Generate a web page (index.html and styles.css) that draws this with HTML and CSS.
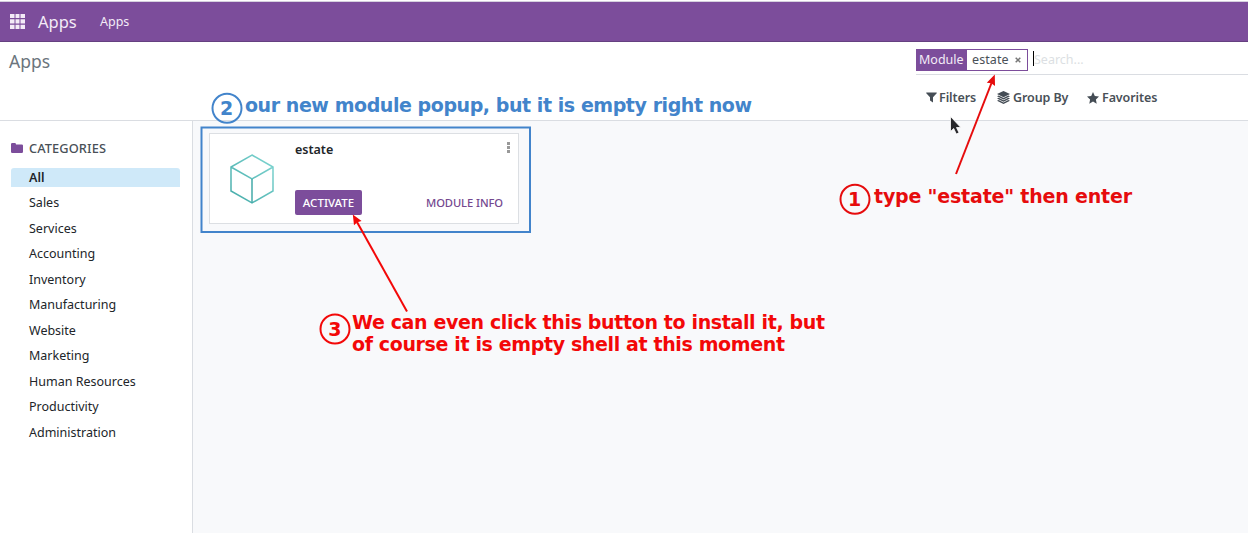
FILE: index.html
```html
<!DOCTYPE html>
<html lang="en">
<head>
<meta charset="utf-8">
<title>Apps</title>
<link rel="stylesheet" href="styles.css">
</head>
<body>
<header class="navbar">
  <svg class="grid-icon" viewBox="0 0 15 15"><path d="M0 0h4.500v4H0zM5.500 0h4v4h-4zM10.500 0H15v4h-4.500zM0 5.300h4.500v4.300H0zM5.500 5.300h4v4.300h-4zM10.500 5.300H15v4.300h-4.500zM0 10.800h4.500V15H0zM5.500 10.800h4V15h-4zM10.500 10.800H15V15h-4.500z"/></svg>
  <span class="brand">Apps</span>
  <span class="nav-link">Apps</span>
</header>
<section class="control-panel">
  <h1 class="title">Apps</h1>
  <div class="search">
    <div class="search-box">
      <div class="facet"><span class="facet-label">Module</span><span class="facet-value">estate</span><svg class="facet-close" viewBox="0 0 6 6"><path d="M.7 .7 5.3 5.3M5.3 .7 .7 5.3"/></svg></div>
      <span class="placeholder">Search...</span>
    </div>
    <div class="filters">
      <span class="filter f-filters"><svg class="funnel" viewBox="0 0 11 11"><path d="M.5 .4h10q.6.4.2.900L7 5.300v5.300L4 8.400V5.300L.3 1.300Q-.1.800.5.4z"/></svg>Filters</span>
      <span class="filter f-group"><svg class="layers" viewBox="0 0 13 13"><path d="M6.500 0 13 3 6.500 6.200 0 3z"/><path d="M0 5.200 1.700 4.500 6.500 6.900 11.300 4.500 13 5.200 6.500 8.400zM0 7.500 1.700 6.800 6.500 9.200 11.300 6.800 13 7.500 6.500 10.700zM0 9.800 1.700 9.100 6.500 11.500 11.300 9.100 13 9.800 6.500 13z"/></svg>Group By</span>
      <span class="filter f-fav"><svg class="star" viewBox="0 0 12 12"><path d="M6 0 7.800 3.900 12 4.500 8.900 7.400 9.700 11.700 6 9.600 2.300 11.700 3.100 7.400 0 4.500 4.200 3.900z"/></svg>Favorites</span>
    </div>
  </div>
</section>
<main class="content">
  <aside class="sidebar">
    <div class="side-head"><svg class="folder" viewBox="0 0 12 10"><path d="M0 1.200Q0 0 1.200 0h2.600Q5 0 5 1.400h5.800q1.200 0 1.200 1.200v6.200Q12 10 10.800 10H1.200Q0 10 0 8.800z"/></svg><span>CATEGORIES</span></div>
    <ul class="cats">
      <li class="active"><span>All</span></li>
      <li><span>Sales</span></li>
      <li><span>Services</span></li>
      <li><span>Accounting</span></li>
      <li><span>Inventory</span></li>
      <li><span>Manufacturing</span></li>
      <li><span>Website</span></li>
      <li><span>Marketing</span></li>
      <li><span>Human Resources</span></li>
      <li><span>Productivity</span></li>
      <li><span>Administration</span></li>
    </ul>
  </aside>
  <div class="board">
    <article class="card">
      <svg class="cube" viewBox="0 0 46 52">
        <defs><linearGradient id="teal" x1="0" y1="1" x2="1" y2="0"><stop offset="0" stop-color="#43aaa8"/><stop offset="1" stop-color="#80d6d2"/></linearGradient></defs>
        <path d="M23 2 44 14V38L23 50 2 38V14zM2 14 23 26 44 14"/><path class="spine" d="M23 26V50"/>
      </svg>
      <div class="card-body">
        <div class="card-top"><span class="name">estate</span><svg class="dots" viewBox="0 0 3 11"><path d="M0 0h3v3H0zM0 4h3v3H0zM0 8h3v3H0z"/></svg></div>
        <div class="card-actions"><button class="activate"><span>ACTIVATE</span></button><a class="info">MODULE INFO</a></div>
      </div>
    </article>
  </div>
</main>
<svg class="annotations" viewBox="0 0 1248 533">
  <g class="blue">
    <rect x="201.500" y="127.500" width="328.500" height="104.500"/>
    <circle cx="227" cy="108.200" r="14.500"/>
    <text x="220" y="115.200" class="num">2</text>
    <text x="245" y="112" textLength="507">our new module popup, but it is empty right now</text>
  </g>
  <g class="red dark">
    <circle cx="855" cy="199.300" r="14.500"/>
    <text x="848" y="206.200" class="num">1</text>
    <text x="874" y="203" textLength="258">type "estate" then enter</text>
    <path class="line" d="M956 174 991.500 83"/><path class="head" d="M994.800 74.500 995 86 991.300 83.300 986.800 82.800z"/>
  </g>
  <g class="red">
    <circle cx="335" cy="329" r="14.500"/>
    <text x="328.200" y="336" class="num">3</text>
    <text x="352" y="329" textLength="473">We can even click this button to install it, but</text>
    <text x="352" y="351" textLength="433">of course it is empty shell at this moment</text>
    <path class="line" d="M407 311.500 357 222"/><path class="head" d="M352.800 214.500 361.600 221 357.300 222.300 354 225.300z"/>
  </g>
  <path class="pointer" d="M950.500 116.500V131.500L953.700 128.500 956.300 134 959 132.800 956.500 127.500H960.800z"/>
</svg>
</body>
</html>
```
FILE: styles.css
```css
* { box-sizing: border-box; }
body {
  margin: 0;
  width: 1248px;
  height: 533px;
  overflow: hidden;
  display: flex;
  flex-direction: column;
  background: #fff;
  color: #212529;
  font: 12.5px/20px "Noto Sans", sans-serif;
}
svg { flex: none; display: block; }
.navbar {
  height: 41px;
  margin-top: 1px;
  flex: none;
  display: flex;
  align-items: center;
  padding: 0 10px;
  background: #7c4d9b;
  border-top: 1px solid #d5d0de;
  border-bottom: 1px solid #654080;
  color: #f3ebf7;
}
.grid-icon { width: 15px; height: 15px; margin-bottom: 1px; fill: #f3ebf7; }
.brand { margin-left: 13px; width: 62px; font-size: 16.500px; }
.nav-link { padding-top: 1px; font-size: 12.500px; }
.control-panel {
  height: 79px;
  flex: none;
  display: flex;
  justify-content: space-between;
  padding: 0 0 0 9px;
  border-bottom: 1px solid #dadde2;
}
.title { margin: 8px 0 0; font-size: 17.500px; line-height: 22px; font-weight: 400; color: #6c757d; }
.search { width: 332px; }
.search-box {
  height: 33px;
  display: flex;
  padding-top: 7px;
  border-bottom: 1px solid #dadde2;
}
.facet {
  width: 112px;
  height: 22px;
  display: flex;
  align-items: center;
  border: 1px solid #7c4d9b;
  color: #495057;
}
.facet-label { width: 50px; height: 20px; padding-left: 2px; background: #7c4d9b; color: #f3ebf7; }
.facet-value { width: 47px; padding-left: 5px; letter-spacing: .1px; }
.facet-close { width: 6px; height: 6px; margin-left: 1px; stroke: #777; stroke-width: 1.500; }
.placeholder { height: 15px; line-height: 17px; margin: 2px 0 0 5px; border-left: 1px solid #000; color: #dcdfe3; }
.filters { display: flex; padding: 13px 0 0 10px; font-size: 12.500px; font-weight: 600; letter-spacing: -.1px; color: #495057; }
.filter { display: flex; align-items: center; }
.filter svg { fill: #454d55; }
.f-filters { width: 71px; }
.f-group { width: 90px; }
.funnel { width: 11px; height: 11px; margin: 0 2px 1px 0; }
.layers { width: 13px; height: 13px; margin: 0 3px 1px 0; }
.star { width: 12px; height: 12px; margin: 0 3px 1px 0; }
.content { flex: 1; display: flex; }
.sidebar { width: 193px; padding: 18px 12px 0 11px; border-right: 1px solid #dadde2; }
.side-head { display: flex; align-items: center; gap: 6px; height: 18px; line-height: 18px; font-size: 12.800px; font-weight: 500; letter-spacing: .1px; color: #495057; }
.folder { width: 12px; height: 10px; fill: #7c4d9b; }
.cats { list-style: none; margin: 11px 0 0; padding: 0; }
.cats li { height: 25.550px; padding-left: 18px; line-height: 25px; }
.cats .active { height: 19px; margin-bottom: 3px; line-height: 19px; background: #cfe9f9; border-radius: 3px 3px 0 0; font-weight: 600; }
.board { flex: 1; padding: 12px 16px; background: #f8f9fb; }
.card { width: 310px; height: 91px; display: flex; padding: 0 15px 0 19px; background: #fff; border: 1px solid #dcdfe3; }
.cube { width: 46px; height: 52px; margin-top: 19px; fill: none; stroke: url(#teal); stroke-width: 1.500; }
.spine { stroke: #43aaa8; }
.card-body { flex: 1; margin-left: 20px; }
.card-top { height: 56px; display: flex; justify-content: space-between; padding-top: 6px; }
.name { font-weight: 600; }
.dots { width: 3px; height: 11px; margin: 2px -7px 0 0; fill: #999; }
.card-actions { display: flex; justify-content: space-between; align-items: center; font-size: 11.500px; }
.activate { width: 67px; height: 25px; border: 0; border-radius: 2px; padding: 0; background: #7c4d9b; color: #fff; font: 500 11.500px/25px "Noto Sans", sans-serif; white-space: nowrap; }
.info { font-weight: 500; font-size: 11.200px; letter-spacing: -.08px; color: #74488f; }
.annotations { position: absolute; left: 0; top: 0; width: 1248px; height: 533px; pointer-events: none; }
.annotations text { font: 700 19px "DejaVu Sans", sans-serif; stroke: none; }
.annotations rect, .annotations circle { fill: none; stroke-width: 2; }
.blue { fill: #4284cb; stroke: #4284cb; }
.red { fill: #f30808; stroke: #f30808; }
.dark { fill: #e60c0d; stroke: #e60c0d; }
.annotations .line { stroke-width: 2; }
.annotations .head { stroke: none; }
.pointer { fill: #26262a; stroke: #fff; stroke-width: .8; }
```
